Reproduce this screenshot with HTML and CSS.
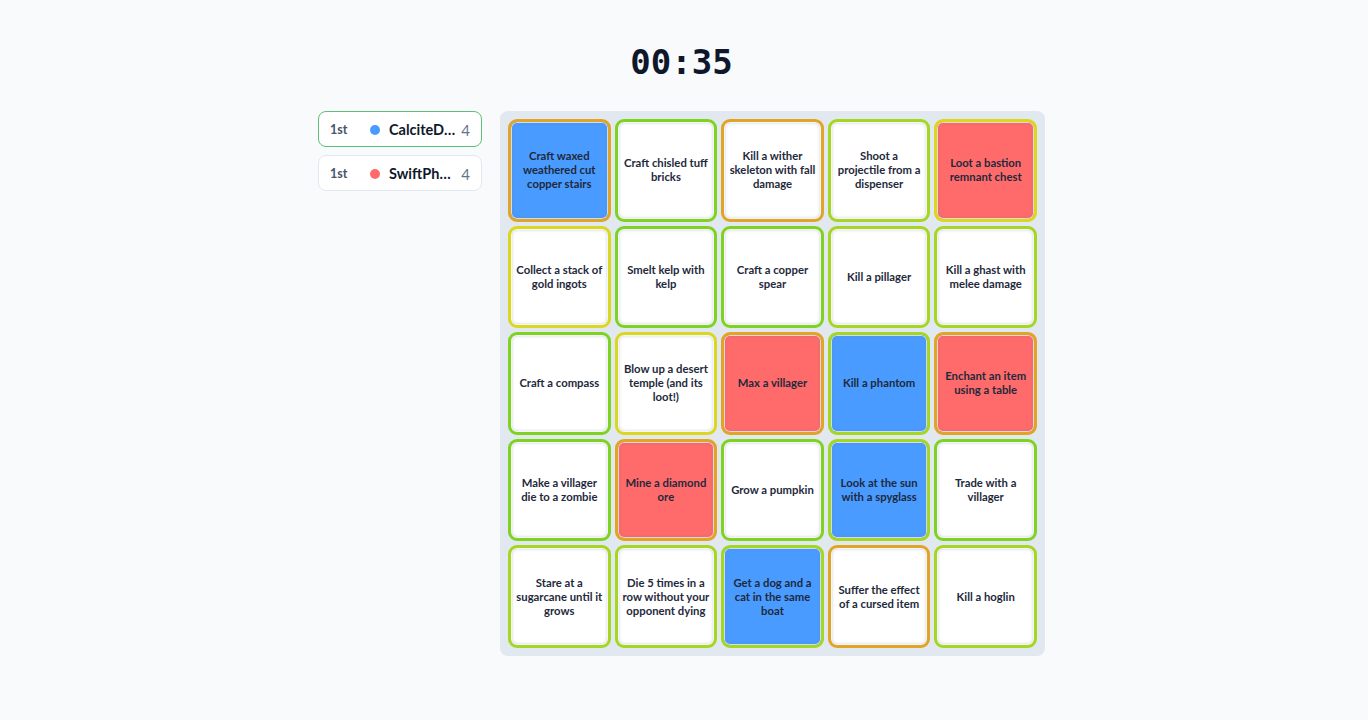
FILE: index.html
```html
<!DOCTYPE html>
<html lang="en">
<head>
<meta charset="utf-8">
<title>Bingo</title>
<link rel="stylesheet" href="styles.css">
</head>
<body>
<div class="page">
  <div class="timer">00:35</div>
  <div class="main">
    <div class="leaderboard">
      <div class="player leader">
        <span class="rank">1st</span>
        <span class="dot blue"></span>
        <span class="name">CalciteDragon</span>
        <span class="score">4</span>
      </div>
      <div class="player">
        <span class="rank">1st</span>
        <span class="dot red"></span>
        <span class="name">SwiftPhoenix</span>
        <span class="score">4</span>
      </div>
    </div>
    <div class="board">
      <div class="cell b-o f-blue">Craft waxed weathered cut copper stairs</div>
      <div class="cell b-g">Craft chisled tuff bricks</div>
      <div class="cell b-o">Kill a wither skeleton with fall damage</div>
      <div class="cell b-l">Shoot a projectile from a dispenser</div>
      <div class="cell b-y f-red">Loot a bastion remnant chest</div>

      <div class="cell b-y">Collect a stack of gold ingots</div>
      <div class="cell b-g">Smelt kelp with kelp</div>
      <div class="cell b-g">Craft a copper spear</div>
      <div class="cell b-l">Kill a pillager</div>
      <div class="cell b-l">Kill a ghast with melee damage</div>

      <div class="cell b-g">Craft a compass</div>
      <div class="cell b-y">Blow up a desert temple (and its loot!)</div>
      <div class="cell b-o f-red">Max a villager</div>
      <div class="cell b-l f-blue">Kill a phantom</div>
      <div class="cell b-o f-red">Enchant an item using a table</div>

      <div class="cell b-g">Make a villager die to a zombie</div>
      <div class="cell b-o f-red">Mine a diamond ore</div>
      <div class="cell b-g">Grow a pumpkin</div>
      <div class="cell b-l f-blue">Look at the sun with a spyglass</div>
      <div class="cell b-g">Trade with a villager</div>

      <div class="cell b-l">Stare at a sugarcane until it grows</div>
      <div class="cell b-l">Die 5 times in a row without your opponent dying</div>
      <div class="cell b-l f-blue">Get a dog and a cat in the same boat</div>
      <div class="cell b-o">Suffer the effect of a cursed item</div>
      <div class="cell b-l">Kill a hoglin</div>
    </div>
  </div>
</div>
</body>
</html>
```
FILE: styles.css
```css
* { box-sizing: border-box; }
html, body { margin: 0; padding: 0; }
body {
  background: #f8fafc;
  font-family: Lato, "Noto Sans", sans-serif;
  color: #1e293b;
}
.page {
  padding: 40px 5px 0 0;
  display: flex;
  flex-direction: column;
  align-items: center;
}
.timer {
  font-family: "DejaVu Sans Mono", "Liberation Mono", monospace;
  font-weight: 700;
  font-size: 34px;
  line-height: 44px;
  color: #0f172a;
}
.main {
  margin-top: 27px;
  display: flex;
  align-items: flex-start;
  gap: 18px;
}
.leaderboard {
  width: 164px;
  display: flex;
  flex-direction: column;
  gap: 8px;
}
.player {
  height: 36px;
  display: flex;
  align-items: center;
  background: #ffffff;
  border: 1px solid #e2e8f0;
  border-radius: 8px;
  padding: 1px 11px 0 11px;
}
.player.leader {
  border-color: #5cbf7a;
}
.rank {
  font-size: 12.5px;
  font-weight: 700;
  color: #475569;
  width: 28px;
  flex: none;
}
.dot {
  width: 10px;
  height: 10px;
  border-radius: 50%;
  margin: 0 9px 0 12px;
  flex: none;
}
.dot.blue { background: #4a9bff; }
.dot.red { background: #ff6b6b; }
.name {
  flex: 1;
  min-width: 0;
  font-size: 14.5px;
  font-weight: 700;
  color: #0f172a;
  white-space: nowrap;
  overflow: hidden;
  text-overflow: ellipsis;
}
.score {
  flex: none;
  font-size: 15px;
  color: #64748b;
  margin-left: 5px;
}
.board {
  width: 545px;
  height: 545px;
  background: #e2e8f0;
  border-radius: 8px;
  padding: 8px;
  display: grid;
  grid-template-columns: repeat(5, 1fr);
  grid-template-rows: repeat(5, 1fr);
  gap: 4px;
}
.cell {
  background: #ffffff;
  border: 3px solid #7ed321;
  border-radius: 9px;
  display: flex;
  align-items: center;
  justify-content: center;
  text-align: center;
  padding: 2px 4.6px;
  font-size: 11.3px;
  font-weight: 700;
  line-height: 14px;
  color: #1e293b;
  box-shadow: inset 0 0 0 1px rgba(255,255,255,0.7), inset 0 0 3px 1px rgba(100,116,139,0.35);
}
.b-o { border-color: #e0a526; }
.b-g { border-color: #7ed321; }
.b-l { border-color: #a4d622; }
.b-y { border-color: #d9d81e; }
.f-blue { background: #4a9bff; }
.f-red { background: #ff6b6b; }
```
